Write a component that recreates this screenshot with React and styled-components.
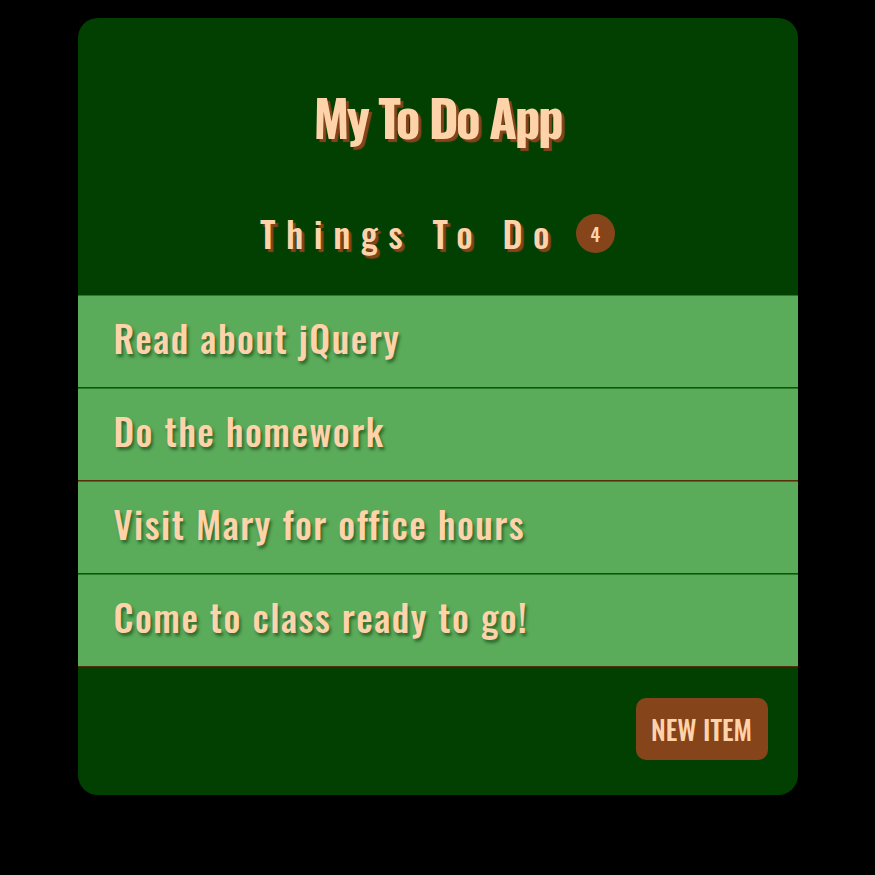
import React from "react";
import styled, { createGlobalStyle } from "styled-components";

const Global = createGlobalStyle`
  html, body { margin: 0; padding: 0; background: #000; }
`;

const FONT = `"Oswald", "Open Sans", sans-serif`;
const PEACH = "#fed3aa";
const BROWN = "#86441a";

const Page = styled.div`
  padding: 18px 0 80px;
`;

const Card = styled.div`
  width: 720px;
  margin: 0 auto;
  background: #024002;
  border-radius: 20px;
  overflow: hidden;
  font-family: ${FONT};
  font-stretch: 75%;
`;

const Header = styled.header`
  height: 277px;
  box-sizing: border-box;
  padding-top: 68px;
  display: flex;
  flex-direction: column;
  align-items: center;
`;

const Title = styled.h1`
  margin: 0;
  font-weight: 700;
  font-size: 51px;
  line-height: 60px;
  letter-spacing: -2.4px;
  color: ${PEACH};
  text-shadow: 3px 3px 1px ${BROWN};
`;

const SubRow = styled.div`
  margin-top: 64px;
  display: flex;
  align-items: center;
`;

const Subtitle = styled.h2`
  margin: 0;
  font-weight: 500;
  font-size: 36px;
  line-height: 46px;
  letter-spacing: 10.5px;
  color: ${PEACH};
  text-shadow: 3px 3px 1px ${BROWN};
`;

const Badge = styled.span`
  margin-left: 16px;
  width: 39px;
  height: 39px;
  border-radius: 50%;
  background: ${BROWN};
  color: ${PEACH};
  font-weight: 500;
  font-size: 19px;
  display: flex;
  align-items: center;
  justify-content: center;
`;

const List = styled.ul`
  list-style: none;
  margin: 0;
  padding: 0;
`;

const Item = styled.li`
  height: 93px;
  box-sizing: border-box;
  border-top: 1px solid #2a7a2a;
  border-bottom: 1px solid #5a2e0a;
  background: #5aab5a;
  padding: 0 36px 8px;
  display: flex;
  align-items: center;
  font-size: 37px;
  font-weight: 500;
  letter-spacing: 1.5px;
  color: ${PEACH};
  text-shadow: 2px 3px 3px #2f6a2f;
`;

const Footer = styled.footer`
  height: 128px;
  box-sizing: border-box;
  display: flex;
  justify-content: flex-end;
  align-items: flex-start;
  padding: 31px 30px 0 0;
`;

const Button = styled.button`
  width: 132px;
  height: 62px;
  border: none;
  border-radius: 10px;
  background: ${BROWN};
  color: ${PEACH};
  font-family: ${FONT};
  font-stretch: 75%;
  font-weight: 500;
  font-size: 27px;
  text-transform: uppercase;
  cursor: pointer;
  padding: 0;
`;

const items = [
  "Read about jQuery",
  "Do the homework",
  "Visit Mary for office hours",
  "Come to class ready to go!",
];

export default function App() {
  return (
    <Page>
      <Global />
      <Card>
        <Header>
          <Title>My To Do App</Title>
          <SubRow>
            <Subtitle>Things To Do</Subtitle>
            <Badge>{items.length}</Badge>
          </SubRow>
        </Header>
        <List>
          {items.map((t) => (
            <Item key={t}>{t}</Item>
          ))}
        </List>
        <Footer>
          <Button>New Item</Button>
        </Footer>
      </Card>
    </Page>
  );
}
